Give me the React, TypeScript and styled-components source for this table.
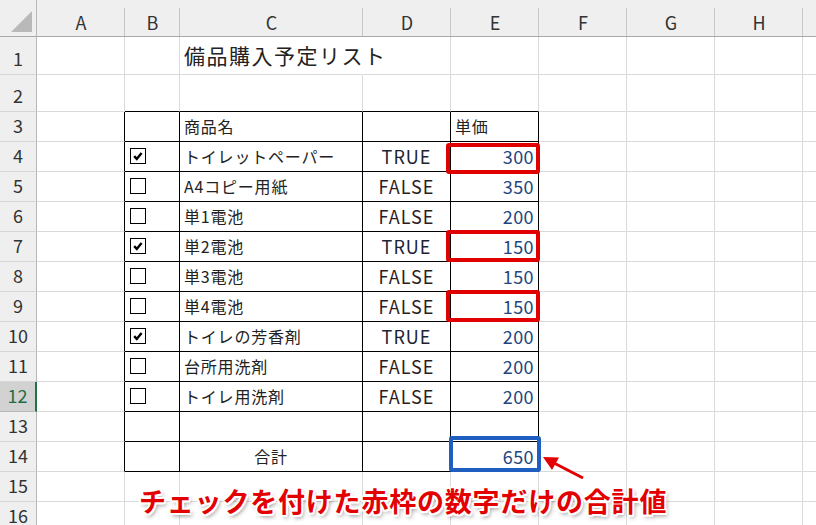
import React from "react";
import styled, { createGlobalStyle } from "styled-components";

const GlobalStyle = createGlobalStyle`
  html, body { margin: 0; padding: 0; background: #fff; }
  body { font-family: "Noto Sans CJK JP", "Noto Sans", sans-serif; }
`;

const Sheet = styled.div`
  position: relative;
  width: 816px;
  height: 525px;
  overflow: hidden;
  display: grid;
  grid-template-columns: 37px 88px 55px 183px repeat(6, 88px);
  grid-template-rows: 37px 38px 37px repeat(14, 30px);
  background: #fff;
  font-family: "Noto Sans CJK JP", "Noto Sans", sans-serif;
`;

const Corner = styled.div`
  box-sizing: border-box;
  display: flex;
  align-items: flex-end;
  justify-content: flex-end;
  padding: 0 4px 4px 0;
  background: #efefef;
  border-bottom: 1px solid #a8a8a8;
  border-right: 1px solid #b8b8b8;
`;

const CornerMark = styled.span`
  width: 21px;
  height: 21px;
  background: #b9b9b9;
  clip-path: polygon(100% 0, 100% 100%, 0 100%);
`;

const ColHead = styled.div`
  position: relative;
  box-sizing: border-box;
  display: flex;
  align-items: center;
  justify-content: center;
  padding-top: 8px;
  background: #efefef;
  border-bottom: 1px solid #a8a8a8;
  font-size: 18px;
  color: #333;
  &::after {
    content: "";
    position: absolute;
    right: 0;
    top: 8px;
    bottom: 0;
    width: 1px;
    background: #c6c6c6;
  }
`;

const RowHead = styled.div<{ $active?: boolean }>`
  box-sizing: border-box;
  display: flex;
  align-items: flex-end;
  justify-content: center;
  padding-bottom: 6px;
  background: ${(p) => (p.$active ? "#d2d2d2" : "#efefef")};
  border-bottom: 1px solid ${(p) => (p.$active ? "#b8b8b8" : "#d6d6d6")};
  border-right: ${(p) => (p.$active ? "2px solid #217346" : "1px solid #b8b8b8")};
  color: ${(p) => (p.$active ? "#1e6e42" : "#333")};
  font-size: 18px;
  line-height: 20px;
`;

type Align = "left" | "center" | "right";

const Cell = styled.div<{ $r: string; $b: string; $align: Align; $pl: number }>`
  position: relative;
  box-sizing: border-box;
  min-width: 0;
  display: flex;
  align-items: center;
  justify-content: ${(p) =>
    p.$align === "center" ? "center" : p.$align === "right" ? "flex-end" : "flex-start"};
  padding: 0 4px 1px ${(p) => p.$pl}px;
  border-right: 1px solid ${(p) => p.$r};
  border-bottom: 1px solid ${(p) => p.$b};
  white-space: nowrap;
  color: #222;
`;

const Title = styled.span`
  font-size: 21px;
  letter-spacing: 1.5px;
  color: #222;
`;

const Name = styled.span`
  font-size: 16px;
  letter-spacing: 0.8px;
  color: #222;
`;

const Flag = styled.span<{ $on: boolean }>`
  font-size: 18px;
  letter-spacing: 1px;
  color: ${(p) => (p.$on ? "#1c2333" : "#2e1c1c")};
`;

const Price = styled.span`
  font-size: 18px;
  letter-spacing: 0.4px;
  color: #22467f;
`;

const Box = styled.span`
  box-sizing: border-box;
  width: 16px;
  height: 16px;
  border: 1px solid #000;
  background: #fff;
  display: inline-flex;
  align-items: center;
  justify-content: center;
`;

const Frame = styled.span<{ $color: string; $t: number; $b: number; $l: number; $r: number }>`
  position: absolute;
  top: ${(p) => p.$t}px;
  bottom: ${(p) => p.$b}px;
  left: ${(p) => p.$l}px;
  right: ${(p) => p.$r}px;
  border: 4.5px solid ${(p) => p.$color};
  border-radius: 3px;
  pointer-events: none;
  z-index: 2;
`;

const Arrow = styled.svg`
  position: absolute;
  left: 538px;
  top: 450px;
  z-index: 3;
  overflow: visible;
`;

const Note = styled.div`
  position: absolute;
  left: 139px;
  top: 486px;
  z-index: 3;
  font-size: 27px;
  line-height: 30px;
  font-weight: 700;
  letter-spacing: 0.8px;
  color: #e30000;
  white-space: nowrap;
  text-shadow: 2px 0 #fff, -2px 0 #fff, 0 2px #fff, 0 -2px #fff, 1.5px 1.5px #fff,
    -1.5px -1.5px #fff, 1.5px -1.5px #fff, -1.5px 1.5px #fff, 2px 3px 4px rgba(0, 0, 0, 0.45);
`;

const CheckBox = ({ on }: { on: boolean }) => (
  <Box>
    {on && (
      <svg width="12" height="12" viewBox="0 0 12 12">
        <path d="M2.2 6.2 L4.8 8.9 L9.6 3" fill="none" stroke="#000" strokeWidth="2.4" />
      </svg>
    )}
  </Box>
);

type Item = { on: boolean; name: string; price: number; frame?: { t: number; b: number } };

const items: Item[] = [
  { on: true, name: "トイレットペーパー", price: 300, frame: { t: 1, b: -3 } },
  { on: false, name: "A4コピー用紙", price: 350 },
  { on: false, name: "単1電池", price: 200 },
  { on: true, name: "単2電池", price: 150, frame: { t: -2, b: -1 } },
  { on: false, name: "単3電池", price: 150 },
  { on: false, name: "単4電池", price: 150, frame: { t: -2, b: -1 } },
  { on: true, name: "トイレの芳香剤", price: 200 },
  { on: false, name: "台所用洗剤", price: 200 },
  { on: false, name: "トイレ用洗剤", price: 200 },
];

const COLS = ["A", "B", "C", "D", "E", "F", "G", "H", ""];
const GRID = "#dadada";
const INK = "#000";

type Spec = { content?: React.ReactNode; align?: Align; pl?: number; r?: string };

function rowCells(row: number): Spec[] {
  const cells: Spec[] = COLS.map(() => ({}));
  if (row === 1) {
    cells[2] = { content: <Title>備品購入予定リスト</Title>, r: "#fff" };
  } else if (row === 3) {
    cells[2] = { content: <Name>商品名</Name> };
    cells[4] = { content: <Name>単価</Name> };
  } else if (row >= 4 && row <= 12) {
    const it = items[row - 4];
    cells[1] = { content: <CheckBox on={it.on} />, pl: 5 };
    cells[2] = { content: <Name>{it.name}</Name> };
    cells[3] = {
      content: <Flag $on={it.on}>{it.on ? "TRUE" : "FALSE"}</Flag>,
      align: "center",
    };
    cells[4] = {
      content: (
        <>
          <Price>{it.price}</Price>
          {it.frame && <Frame $color="#e00000" $t={it.frame.t} $b={it.frame.b} $l={-5} $r={-2} />}
        </>
      ),
      align: "right",
    };
  } else if (row === 14) {
    cells[2] = { content: <Name>合計</Name>, align: "center" };
    cells[4] = {
      content: (
        <>
          <Price>650</Price>
          <Frame $color="#1f5fbf" $t={-6} $b={-1} $l={-2} $r={-3} />
        </>
      ),
      align: "right",
    };
  }
  return cells;
}

const ROWS = Array.from({ length: 16 }, (_, i) => i + 1);

export default function App() {
  return (
    <>
      <GlobalStyle />
      <Sheet>
        <Corner>
          <CornerMark />
        </Corner>
        {COLS.map((c, i) => (
          <ColHead key={i}>{c}</ColHead>
        ))}
        {ROWS.map((row) => {
          const inTable = row >= 3 && row <= 14;
          return (
            <React.Fragment key={row}>
              <RowHead $active={row === 12}>{row}</RowHead>
              {rowCells(row).map((s, ci) => {
                const right = s.r ?? (inTable && ci <= 4 ? INK : GRID);
                const bottom = row >= 2 && row <= 14 && ci >= 1 && ci <= 4 ? INK : GRID;
                return (
                  <Cell
                    key={ci}
                    $r={right}
                    $b={bottom}
                    $align={s.align ?? "left"}
                    $pl={s.pl ?? 4}
                  >
                    {s.content}
                  </Cell>
                );
              })}
            </React.Fragment>
          );
        })}
        <Arrow width="50" height="32" viewBox="0 0 50 32">
          <line x1="45" y1="28" x2="15" y2="12.5" stroke="#e30000" strokeWidth="3" />
          <polygon points="5,7 21,7.5 14,20" fill="#e30000" />
        </Arrow>
        <Note>チェックを付けた赤枠の数字だけの合計値</Note>
      </Sheet>
    </>
  );
}
